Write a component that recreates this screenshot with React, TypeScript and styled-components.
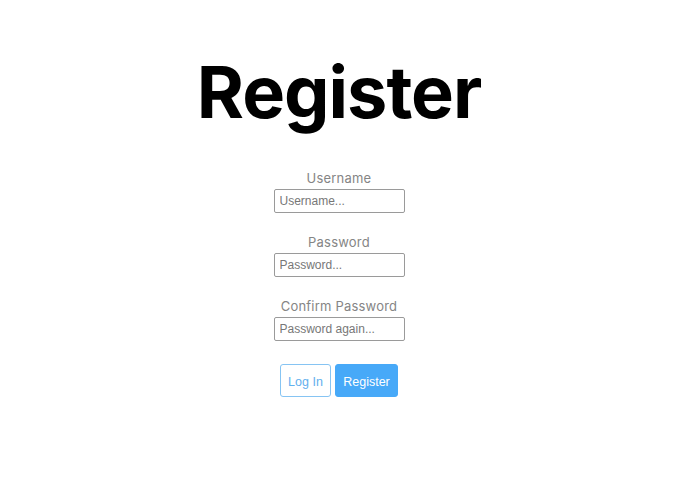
import { useState } from 'react'
import styled, { createGlobalStyle } from 'styled-components'

const GlobalStyle = createGlobalStyle`
    body {
        margin: 0;
        background: #ffffff;
        font-family: 'Inter', 'Noto Sans', sans-serif;
    }
`

function App() {
    const [username, setUsername] = useState('')
    const [password, setPassword] = useState('')
    const [confirm, setConfirm] = useState('')

    return (
        <>
            <GlobalStyle />
            <Page>
                <Title>Register</Title>
                <Form onSubmit={e => e.preventDefault()}>
                    <Field>
                        <Label>Username</Label>
                        <Input placeholder="Username..." value={username} onChange={e => setUsername(e.target.value)} />
                    </Field>
                    <Field>
                        <Label>Password</Label>
                        <Input type="password" placeholder="Password..." value={password} onChange={e => setPassword(e.target.value)} />
                    </Field>
                    <Field>
                        <Label>Confirm Password</Label>
                        <Input type="password" placeholder="Password again..." value={confirm} onChange={e => setConfirm(e.target.value)} />
                    </Field>
                    <ButtonRow>
                        <Button type="button" $variant="outline" $width={51}>Log In</Button>
                        <Button type="submit" $variant="solid" $width={63}>Register</Button>
                    </ButtonRow>
                </Form>
            </Page>
        </>
    )
}

export default App

const Page = styled.div`
    display: flex;
    flex-direction: column;
    align-items: center;
    padding-top: 48px;
    padding-right: 17px;
`

const Title = styled.h1`
    margin: 0;
    font-family: 'Inter', sans-serif;
    font-size: 72px;
    font-weight: 700;
    line-height: 88px;
    color: #000000;
    letter-spacing: -1px;
`

const Form = styled.form`
    display: flex;
    flex-direction: column;
    align-items: center;
    margin-top: 33px;
`

const Field = styled.div`
    display: flex;
    flex-direction: column;
    align-items: center;
    gap: 2px;
    margin-bottom: 20px;
`

const Label = styled.label`
    font-family: 'Inter', sans-serif;
    font-size: 13px;
    line-height: 18px;
    letter-spacing: 0.2px;
    color: #858585;
`

const Input = styled.input`
    box-sizing: border-box;
    width: 131px;
    height: 24px;
    padding: 0 5px;
    border: 1px solid #9a9a9a;
    border-radius: 2px;
    font-family: 'Liberation Sans', sans-serif;
    font-size: 12px;
    color: #333;
    outline: none;

    &::placeholder {
        color: #777777;
    }
`

const ButtonRow = styled.div`
    display: flex;
    gap: 4px;
    margin-top: 3px;
`

const Button = styled.button<{ $variant: 'outline' | 'solid'; $width: number }>`
    box-sizing: border-box;
    width: ${p => p.$width}px;
    height: 33px;
    padding: 2px 0 0;
    border-radius: 3px;
    font-family: 'Liberation Sans', sans-serif;
    font-size: 12.5px;
    cursor: pointer;
    border: 1px solid ${p => (p.$variant === 'solid' ? '#47a9f8' : '#86c4f3')};
    background: ${p => (p.$variant === 'solid' ? '#47a9f8' : '#ffffff')};
    color: ${p => (p.$variant === 'solid' ? '#ffffff' : '#62b0ee')};
`
